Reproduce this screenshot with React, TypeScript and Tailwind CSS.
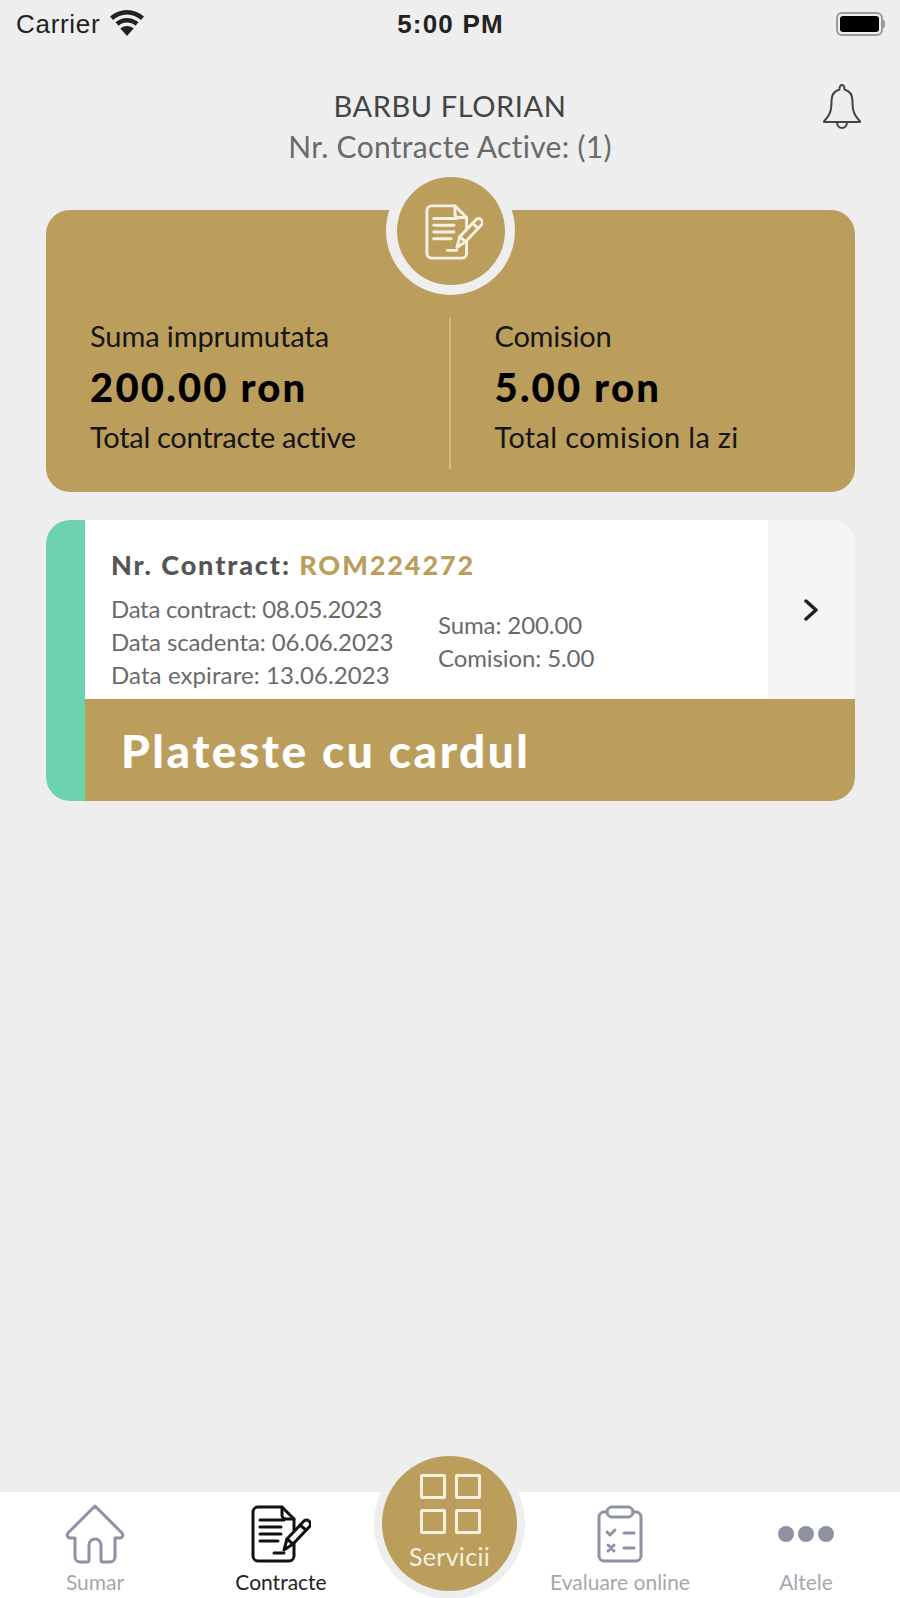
import { ReactNode } from "react"

function ContractIcon({ className, width = 3 }: { className?: string; width?: number }) {
    return (
        <svg viewBox="0 0 60 58" className={className} fill="none" stroke="currentColor" strokeWidth={width} strokeLinecap="round" strokeLinejoin="round">
            <path d="M43 26V14L31 2H7a5 5 0 0 0-5 5v44a5 5 0 0 0 5 5h31a5 5 0 0 0 5-5V38" />
            <path d="M31 2v8a4 4 0 0 0 4 4h8" />
            <path d="M9 15h24M9 22h21M9 29h21M9 36h18M23 48h10" />
            <path d="M33 45l3-11 17-18a4 4 0 0 1 6 5L42 39z" />
            <path d="M36 34l6 5M49 20l6 5" />
        </svg>
    )
}

function NavItem({ label, color, children }: { label: string; color: string; children: ReactNode }) {
    return (
        <div className="flex flex-col items-center pt-[11px]">
            <div className="h-[61px] flex items-center justify-center">{children}</div>
            <span className="mt-[5px] text-[21px] leading-[26px] whitespace-nowrap" style={{ color }}>{label}</span>
        </div>
    )
}

export default function App() {
    return (
        <div className="relative w-[900px] h-[1598px] overflow-hidden flex flex-col bg-[#eeeeee] font-['Lato',sans-serif]">
            {/* status bar */}
            <div className="h-[48px] grid grid-cols-[1fr_auto_1fr] items-center pl-[16px] pr-[15px] font-['Liberation_Sans',sans-serif] text-[#222]">
                <div className="flex items-center gap-[10px]">
                    <span className="text-[26px] tracking-[0.7px]">Carrier</span>
                    <svg viewBox="0 0 34 26" className="w-[34px] h-[26px] -mt-[3px]" fill="#222">
                        <path d="M17 0C10.5 0 5 2.4 0 6.5l3 3.4C7 6.6 11.6 4.4 17 4.4s10 2.2 14 5.500l3-3.400C29 2.400 23.500 0 17 0z" />
                        <path d="M17 8c-4.500 0-8.300 1.600-11.500 4.300l3 3.400C11 13.700 13.800 12.500 17 12.500s6 1.200 8.500 3.200l3-3.400C25.300 9.600 21.500 8 17 8z" />
                        <path d="M17 16c-2.700 0-4.900 1-6.600 2.400L17 26l6.600-7.600C21.900 17 19.700 16 17 16z" />
                    </svg>
                </div>
                <span className="text-[26px] font-bold tracking-[1.2px]">5:00 PM</span>
                <div className="flex justify-end">
                    <div className="flex items-center">
                        <div className="w-[47px] h-[24px] rounded-[6px] border-2 border-[#9a9a9a] p-[2px]">
                            <div className="w-full h-full rounded-[3px] bg-black" />
                        </div>
                        <div className="w-[2px] h-[8px] rounded-r bg-[#9a9a9a]" />
                    </div>
                </div>
            </div>

            {/* header */}
            <div className="grid grid-cols-[1fr_auto_1fr] mt-[40px] px-[38px]">
                <div />
                <div className="text-center">
                    <div className="text-[29px] leading-[36px] text-[#444] tracking-[0.6px]">BARBU FLORIAN</div>
                    <div className="text-[30px] leading-[40px] mt-[2px] text-[#6a6a6a] tracking-[0.3px]">Nr. Contracte Active: (1)</div>
                </div>
                <div className="flex justify-end">
                    <svg viewBox="0 0 40 46" className="w-[40px] h-[46px] -mt-[5px] text-[#444]" fill="none" stroke="currentColor" strokeWidth="2" strokeLinejoin="round">
                        <path d="M20 2c-1.500 0-2.500 1.500-2.500 4.500C12 8 9.500 12.500 9.500 18c0 10-1.500 14-7.500 20.500V39h36v-.5C32 32 30.500 28 30.500 18c0-5.500-2.500-10-8-11.500C22.500 3.500 21.500 2 20 2z" />
                        <path d="M15 39c0 4 2.500 6 5 6s5-2 5-6" />
                    </svg>
                </div>
            </div>

            {/* content */}
            <div className="flex-1 px-[46px] pr-[45px] mt-[44px]">
                <div className="relative h-[282px] rounded-[24px] bg-[#bb9e5c] grid grid-cols-2 pt-[108px]">
                    <div className="absolute left-[340px] -top-[44px] w-[129px] h-[129px] rounded-full bg-[#eeeeee] flex items-center justify-center">
                        <div className="w-[108px] h-[108px] rounded-full bg-[#bb9e5c] flex items-center justify-center text-[#f7f1e3]">
                            <ContractIcon className="w-[58px] h-[58px] ml-[6px] mt-[2px]" width={3} />
                        </div>
                    </div>
                    <div className="pl-[44px] h-[151px] border-r-2 border-[#d2bb85] text-[#151515]">
                        <div className="-mt-[2px] text-[29px] leading-[40px] tracking-[-0.1px]">Suma imprumutata</div>
                        <div className="text-[40px] leading-[50px] mt-[6px] font-black text-black tracking-[2.2px]">200.00 ron</div>
                        <div className="text-[29px] leading-[40px] mt-[5px] tracking-[-0.3px]">Total contracte active</div>
                    </div>
                    <div className="pl-[44px] h-[151px] text-[#151515]">
                        <div className="-mt-[2px] text-[29px] leading-[40px] tracking-[-0.2px]">Comision</div>
                        <div className="text-[40px] leading-[50px] mt-[6px] font-black text-black tracking-[2.2px]">5.00 ron</div>
                        <div className="text-[29px] leading-[40px] mt-[5px] tracking-[0.3px]">Total comision la zi</div>
                    </div>
                </div>

                <div className="mt-[28px] h-[281px] rounded-[24px] overflow-hidden flex bg-white">
                    <div className="w-[39px] bg-[#6dd3ae]" />
                    <div className="flex-1 flex flex-col">
                        <div className="h-[179px] flex">
                            <div className="flex-1 pl-[26px] pt-[29px]">
                                <div className="text-[27px] leading-[32px] font-black text-[#555] tracking-[1.9px]">
                                    Nr. Contract: <span className="text-[#bb9e5c]">ROM224272</span>
                                </div>
                                <div className="flex mt-[11px] text-[24px] leading-[33px] text-[#6a6a6a] tracking-[-0.1px]">
                                    <div className="w-[327px]">
                                        <div className="tracking-[-0.3px]">Data contract: 08.05.2023</div>
                                        <div>Data scadenta: 06.06.2023</div>
                                        <div className="tracking-[0.1px]">Data expirare: 13.06.2023</div>
                                    </div>
                                    <div className="pt-[16px]">
                                        <div>Suma: 200.00</div>
                                        <div>Comision: 5.00</div>
                                    </div>
                                </div>
                            </div>
                            <div className="w-[87px] bg-[#f5f5f5] flex items-center justify-center pr-[1px]">
                                <svg viewBox="0 0 14 22" className="w-[14px] h-[22px]" fill="none" stroke="#222" strokeWidth="3.5" strokeLinecap="round" strokeLinejoin="round">
                                    <path d="M2 2l10 9-10 9" />
                                </svg>
                            </div>
                        </div>
                        <div className="flex-1 bg-[#bb9e5c] flex items-center pl-[36px]">
                            <span className="text-[46px] font-black text-white tracking-[2.5px]">Plateste cu cardul</span>
                        </div>
                    </div>
                </div>
            </div>

            {/* bottom nav */}
            <div className="h-[106px] bg-white grid grid-cols-[190px_182px_156px_184px_188px]">
                <NavItem label="Sumar" color="#a4a7b2">
                    <svg viewBox="0 0 60 60" className="w-[60px] h-[60px]" fill="none" stroke="#8e92a2" strokeWidth="3" strokeLinecap="round" strokeLinejoin="round">
                        <path d="M30 2L3 29a3 3 0 0 0 2 5h5v19a5 5 0 0 0 5 5h7a2 2 0 0 0 2-2V41a6 6 0 0 1 12 0v15a2 2 0 0 0 2 2h7a5 5 0 0 0 5-5V34h5a3 3 0 0 0 2-5z" />
                    </svg>
                </NavItem>
                <NavItem label="Contracte" color="#222">
                    <ContractIcon className="w-[60px] h-[58px] text-[#111]" width={3} />
                </NavItem>
                <div className="relative">
                    <div className="absolute left-[2px] -top-[44px] w-[151px] h-[151px] rounded-full bg-[#eeeeee] flex items-center justify-center">
                        <div className="w-[135px] h-[135px] rounded-full bg-[#bb9e5c] flex flex-col items-center pt-[18px] text-[#f7f0e0]">
                            <div className="grid grid-cols-2 gap-x-[9px] gap-y-[10px] ml-[2px]">
                                <div className="w-[26px] h-[25px] border-[3px] border-[#f7f0e0] rounded-[2px]" />
                                <div className="w-[26px] h-[25px] border-[3px] border-[#f7f0e0] rounded-[2px]" />
                                <div className="w-[26px] h-[25px] border-[3px] border-[#f7f0e0] rounded-[2px]" />
                                <div className="w-[26px] h-[25px] border-[3px] border-[#f7f0e0] rounded-[2px]" />
                            </div>
                            <span className="text-[25px] leading-[30px] mt-[7px] tracking-[0.3px]">Servicii</span>
                        </div>
                    </div>
                </div>
                <NavItem label="Evaluare online" color="#a4a7b2">
                    <svg viewBox="0 0 46 58" className="w-[46px] h-[58px]" fill="none" stroke="#8e92a2" strokeWidth="3" strokeLinecap="round" strokeLinejoin="round">
                        <path d="M10 7H7a5 5 0 0 0-5 5v39a5 5 0 0 0 5 5h32a5 5 0 0 0 5-5V12a5 5 0 0 0-5-5h-3" />
                        <rect x="10" y="2" width="26" height="10" rx="5" />
                        <path d="M10 27l3 3 5-5M27 28h10M11 40l6 6M17 40l-6 6M27 43h10" />
                    </svg>
                </NavItem>
                <NavItem label="Altele" color="#a4a7b2">
                    <div className="flex gap-[4px]">
                        <div className="w-[16px] h-[16px] rounded-full bg-[#8e92a2]" />
                        <div className="w-[16px] h-[16px] rounded-full bg-[#8e92a2]" />
                        <div className="w-[16px] h-[16px] rounded-full bg-[#8e92a2]" />
                    </div>
                </NavItem>
            </div>
        </div>
    )
}
